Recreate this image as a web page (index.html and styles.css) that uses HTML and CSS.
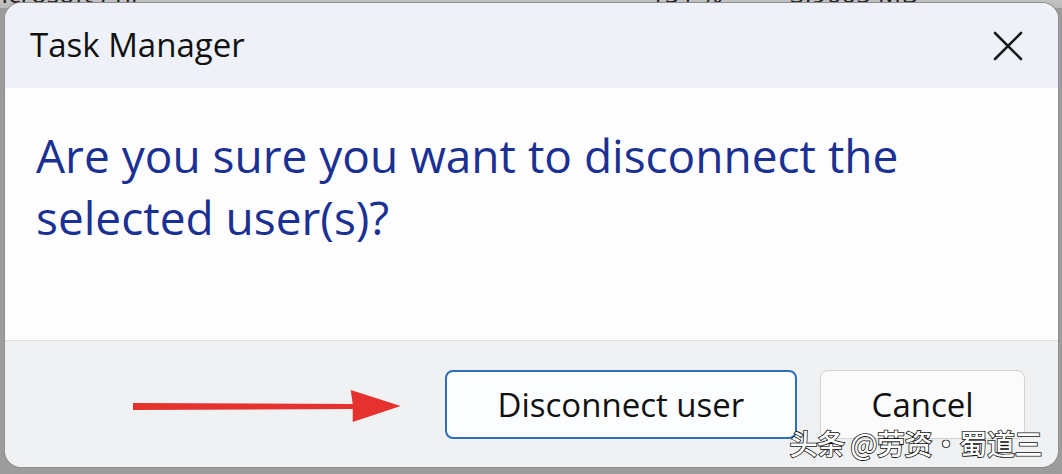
FILE: index.html
```html
<!DOCTYPE html>
<html>
<head>
<meta charset="utf-8">
<link rel="stylesheet" href="styles.css">
</head>
<body>
<div class="behind">
  <span class="behind-left">Microsoft Phi</span>
  <span class="behind-mid">151 %</span>
  <span class="behind-right">3,9005 MB</span>
</div>
<div class="dialog">
  <div class="titlebar">
    <span class="title">Task Manager</span>
    <svg class="close" width="32" height="32" viewBox="0 0 32 32"><path d="M3 3 L29 29 M29 3 L3 29" stroke="#1a1a1a" stroke-width="2.6" fill="none" stroke-linecap="round"/></svg>
  </div>
  <div class="content">
    <p class="message">Are you sure you want to disconnect the selected user(s)?</p>
  </div>
  <div class="footer">
    <svg class="arrow" width="272" height="36" viewBox="0 0 272 36"><path d="M2 15 L222 16 L220 2 L270 18 L222 34 L222 21 L2 22 Z" fill="#e5322f"/></svg>
    <button class="btn primary">Disconnect user</button>
    <button class="btn">Cancel</button>
    <span class="watermark">头条 @劳资·蜀道三</span>
  </div>
</div>
</body>
</html>
```
FILE: styles.css
```css
html, body {
  margin: 0;
  padding: 0;
}
body {
  width: 1062px;
  height: 474px;
  background: #9c9c9c;
  position: relative;
  overflow: hidden;
  font-family: "Open Sans", "Noto Sans", sans-serif;
}
.behind {
  position: absolute;
  left: 0;
  top: -22px;
  width: 1062px;
  height: 30px;
  background: linear-gradient(#d8d8d8, #b9b9b9);
  font-size: 26px;
  color: #222;
  line-height: 30px;
}
.behind-left { position: absolute; left: -22px; }
.behind-mid { position: absolute; left: 650px; }
.behind-right { position: absolute; left: 790px; }
.dialog {
  position: relative;
  margin: 3px 4px 0 5px;
  height: 464px;
  border-radius: 16px;
  overflow: hidden;
  display: flex;
  flex-direction: column;
  background: #f0f1f2;
  box-shadow: 0 0 0 1px #8e8e8e;
}
.titlebar {
  height: 85px;
  background: #eef2f8;
  display: flex;
  align-items: center;
  justify-content: space-between;
  padding: 0 34px 0 25px;
}
.title {
  font-size: 33px;
  color: #111;
  margin-top: -2px;
}
.close { display: block; }
.content {
  height: 252px;
  background: #fdfdfe;
  box-sizing: border-box;
  padding: 36px 110px 0 31px;
}
.message {
  margin: 0;
  font-size: 46px;
  line-height: 62px;
  color: #1a3193;
}
.footer {
  flex: 1;
  border-top: 1px solid #dcdde0;
  display: flex;
  align-items: center;
  padding: 0 33px 0 126px;
  position: relative;
}
.arrow { display: block; margin-right: 42px; margin-top: 4px; }
.btn {
  height: 69px;
  border-radius: 8px;
  font-family: "Open Sans", "Noto Sans", sans-serif;
  font-size: 33px;
  color: #111;
  background: #fbfbfb;
  border: 1px solid #d2d2d2;
  padding: 0 0 0 0;
  margin-top: 1px;
}
.btn.primary {
  width: 353px;
  border: 2px solid #2c6fb8;
  background: #fbfdff;
  margin-right: 23px;
}
.btn:not(.primary) { width: 205px; }
.watermark {
  position: absolute;
  right: 16px;
  bottom: 4px;
  font-family: "Noto Sans CJK SC", sans-serif;
  font-size: 28px;
  font-weight: 500;
  letter-spacing: -0.5px;
  color: #fff;
  -webkit-text-stroke: 1.6px #111;
  paint-order: stroke fill;
}
```
